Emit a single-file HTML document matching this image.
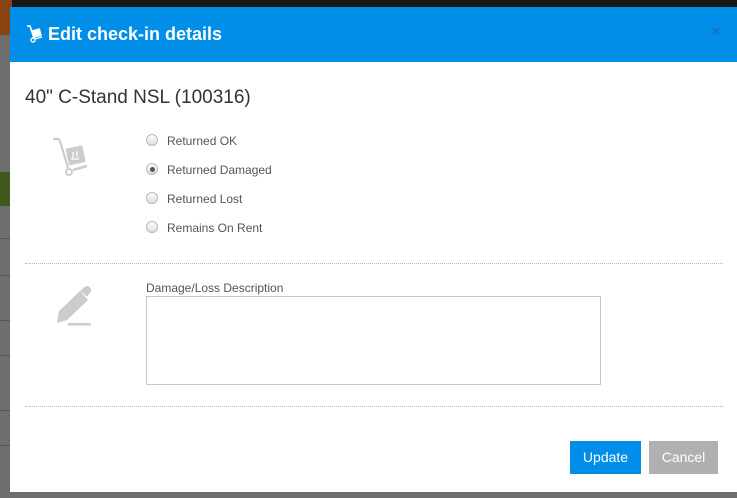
<!DOCTYPE html>
<html><head><meta charset="utf-8"><style>
*{box-sizing:border-box;margin:0;padding:0}
body{width:737px;height:498px;overflow:hidden;position:relative;background:#6e6e6e;font-family:"Liberation Sans","DejaVu Sans",sans-serif}
.nav{position:absolute;left:0;top:0;width:737px;height:10px;background:#171717}
.brown{position:absolute;left:0;top:0;width:12px;height:35px;background:#8a4312}
.green{position:absolute;left:0;top:172px;width:12px;height:34px;background:#3f5a1c}
.line{position:absolute;left:0;width:12px;height:1px;background:#555}
.modal{position:absolute;left:10px;top:7px;width:740px;height:485px;background:#fff}
.hdr{height:55px;background:#008ee8;color:#fff;font-size:18px;font-weight:bold;padding:17px 0 0 38px;position:relative}
.x{position:absolute;left:700px;top:17px;color:#1a6fae;font-size:13px;font-weight:normal}
h2{position:absolute;left:15px;top:80px;font-size:19px;font-weight:normal;color:#333}
.r{position:absolute;left:137px;font-size:12px;color:#555}
.r i{position:absolute;left:-1px;top:0;width:12px;height:12px;border-radius:50%;border:1px solid #b8b8b8;background:linear-gradient(#fff,#ddd)}
.r span{position:absolute;left:20px;top:0;white-space:nowrap}
.dot{position:absolute;left:3px;top:3px;width:5px;height:5px;border-radius:50%;background:#555}
.sep{position:absolute;left:15px;width:698px;border-top:1px dotted #bbb}
.lbl{position:absolute;left:136px;top:274px;font-size:12px;color:#555}
.ta{position:absolute;left:136px;top:289px;width:455px;height:89px;border:1px solid #c8c8c8}
.btn{position:absolute;top:434px;height:33px;color:#fff;font-size:14px;text-align:center;line-height:33px}
</style></head><body>
<div class="nav"></div>
<div class="brown"></div><div class="green"></div>
<div class="line" style="top:238px"></div><div class="line" style="top:275px"></div><div class="line" style="top:320px"></div><div class="line" style="top:355px"></div><div class="line" style="top:410px"></div><div class="line" style="top:445px"></div>
<div class="modal">
<div class="hdr"><svg style="position:absolute;left:15px;top:17px" width="18" height="20" viewBox="0 0 18 20"><path d="M2 2h3l4 12" stroke="#fff" stroke-width="1.6" fill="none"/><rect x="8" y="5" width="8" height="8" fill="#fff" transform="rotate(-15 12 9)"/><circle cx="8" cy="16" r="2" fill="none" stroke="#fff" stroke-width="1.4"/><path d="M10 15l7-2" stroke="#fff" stroke-width="1.4"/></svg>Edit check-in details<span class="x">✕</span></div>
<h2>40" C-Stand NSL (100316)</h2>
<svg style="position:absolute;left:40px;top:128px" width="42" height="44" viewBox="0 0 42 44"><path d="M3 4h5l2 2 8 27" stroke="#ccc" stroke-width="2.2" fill="none"/><rect x="17" y="12" width="17" height="17" fill="#ccc" transform="rotate(-12 25 20)"/><path d="M23 23v-6M27 22v-6M21 24h8" stroke="#fff" stroke-width="1.2"/><circle cx="19" cy="37" r="3" fill="none" stroke="#ccc" stroke-width="2"/><path d="M23 35l14-4" stroke="#ccc" stroke-width="2.5"/></svg>
<div class="r" style="top:127px"><i></i><span>Returned OK</span></div>
<div class="r" style="top:156px"><i><b class="dot"></b></i><span>Returned Damaged</span></div>
<div class="r" style="top:185px"><i></i><span>Returned Lost</span></div>
<div class="r" style="top:214px"><i></i><span>Remains On Rent</span></div>
<div class="sep" style="top:256px"></div>
<svg style="position:absolute;left:40px;top:278px" width="44" height="44" viewBox="0 0 44 44"><path d="M9 26L30 6l8 9-21 20-10 3z" fill="#ccc"/><path d="M30 6l4-3.5a4 4 0 0 1 6 5.5l-3 3.5z" fill="#ccc"/><rect x="18" y="38" width="23" height="2.5" fill="#ccc"/></svg>
<div class="lbl">Damage/Loss Description</div>
<div class="ta"></div>
<div class="sep" style="top:399px"></div>
<div class="btn" style="left:560px;width:71px;background:#008ee8">Update</div>
<div class="btn" style="left:639px;width:69px;background:#b0b0b0">Cancel</div>
</div>
</body></html>
